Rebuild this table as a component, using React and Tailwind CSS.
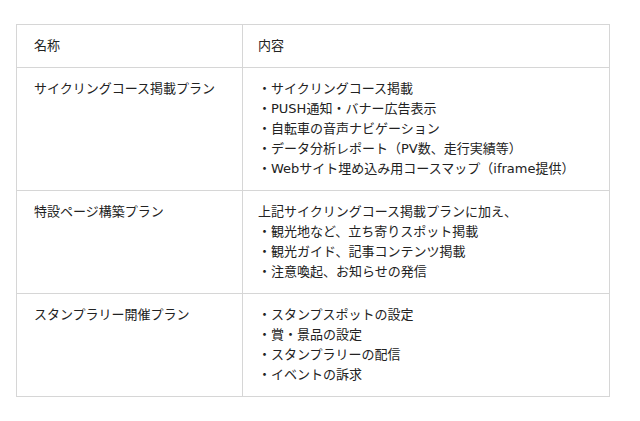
const ROWS = [
  {
    name: "サイクリングコース掲載プラン",
    lines: [
      "・サイクリングコース掲載",
      "・PUSH通知・バナー広告表示",
      "・自転車の音声ナビゲーション",
      "・データ分析レポート（PV数、走行実績等）",
      "・Webサイト埋め込み用コースマップ（iframe提供）",
    ],
  },
  {
    name: "特設ページ構築プラン",
    lines: [
      "上記サイクリングコース掲載プランに加え、",
      "・観光地など、立ち寄りスポット掲載",
      "・観光ガイド、記事コンテンツ掲載",
      "・注意喚起、お知らせの発信",
    ],
  },
  {
    name: "スタンプラリー開催プラン",
    lines: ["・スタンプスポットの設定", "・賞・景品の設定", "・スタンプラリーの配信", "・イベントの訴求"],
  },
];

export default function App() {
  return (
    <div className="min-h-[421px] w-[640px] bg-white pl-[16px] pt-[24px] font-['DejaVu_Sans','Noto_Sans_CJK_JP',sans-serif] text-[13px] leading-[20px] text-[#222]">
      <table className="w-[594px] table-fixed border-collapse">
        <colgroup>
          <col className="w-[226px]" />
          <col />
        </colgroup>
        <thead>
          <tr>
            <th className="border border-[#d6d6d6] py-[11px] pl-[17px] text-left font-normal">名称</th>
            <th className="border border-[#d6d6d6] py-[11px] pl-[15px] text-left font-normal">内容</th>
          </tr>
        </thead>
        <tbody>
          {ROWS.map((r) => (
            <tr key={r.name}>
              <td className="border border-[#d6d6d6] py-[11px] pl-[17px] align-top">{r.name}</td>
              <td className="border border-[#d6d6d6] py-[11px] pl-[15px] align-top">
                {r.lines.map((l) => (
                  <div key={l}>{l}</div>
                ))}
              </td>
            </tr>
          ))}
        </tbody>
      </table>
    </div>
  );
}
